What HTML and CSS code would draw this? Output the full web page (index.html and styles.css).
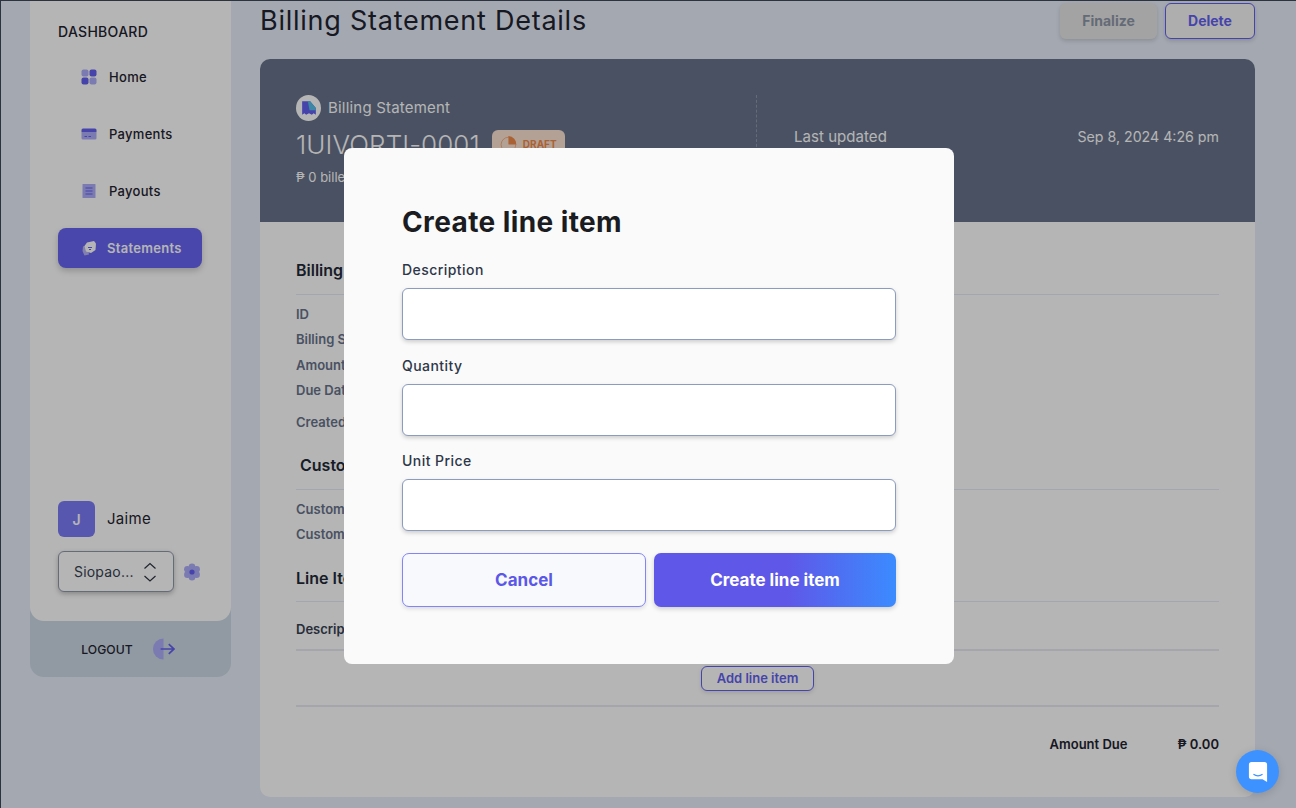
FILE: index.html
```html
<!DOCTYPE html>
<html lang="en">

<head>
    <meta charset="UTF-8">
    <meta name="viewport" content="width=device-width, initial-scale=1.0">
    <title>Billing Statement Details</title>
    <link rel="stylesheet" href="styles.css">
</head>

<body>
    <div class="page">
        <aside class="sidebar">
            <div class="sidebar-main">
                <div class="sidebar-title">DASHBOARD</div>
                <nav class="nav">
                    <a href="#" class="nav-item">
                        <svg class="nav-icon" viewBox="0 0 16 16">
                            <rect x="0.5" y="0.5" width="7" height="7" rx="2" fill="#aeadf9" />
                            <rect x="8.5" y="0.5" width="7" height="7" rx="2" fill="#6361f0" />
                            <rect x="0.5" y="8.5" width="7" height="7" rx="2" fill="#6361f0" />
                            <rect x="8.5" y="8.5" width="7" height="7" rx="2" fill="#aeadf9" />
                        </svg>
                        Home
                    </a>
                    <a href="#" class="nav-item">
                        <svg class="nav-icon" viewBox="0 0 16 16">
                            <path d="M2 2.500h12A1.500 1.500 0 0 1 15.500 4V6H0.500V4A1.500 1.500 0 0 1 2 2.500z" fill="#6361f0" />
                            <path d="M0.500 6H15.500v6a1.500 1.500 0 0 1-1.500 1.500H2A1.500 1.500 0 0 1 0.500 12z" fill="#aeadf9" />
                            <path d="M3.500 10.500h2.500M7.500 10.500h2.500" stroke="#6361f0" stroke-width="1" />
                        </svg>
                        Payments
                    </a>
                    <a href="#" class="nav-item">
                        <svg class="nav-icon" viewBox="0 0 16 16">
                            <rect x="1.500" y="1" width="13" height="14" rx="0.500" fill="#aeadf9" />
                            <path d="M4.500 5h7M4.500 8h7M4.500 11h7" stroke="#6361f0" stroke-width="1.100" />
                        </svg>
                        Payouts
                    </a>
                    <a href="#" class="nav-item nav-item-active">
                        <svg class="nav-icon" viewBox="0 0 16 16">
                            <path d="M2 6.500 6 5 8 14.500 3.500 15.500 1.500 11z" fill="#d9d9f5" opacity="0.7" />
                            <path d="M6 2.500 13 1l2 2.500-.5 6.500-4.500 3-5-1.500L3.500 6z" fill="#fff" />
                            <path d="M7 7.500h4M8 9.500h2" stroke="#6361f0" stroke-width="1" />
                        </svg>
                        Statements
                    </a>
                </nav>
                <div class="sidebar-bottom">
                    <div class="user">
                        <div class="avatar">J</div>
                        <span class="user-name">Jaime</span>
                    </div>
                    <div class="org">
                        <div class="org-select">
                            <span class="org-name">Siopao...</span>
                            <svg class="chevrons" viewBox="0 0 14 24">
                                <path d="M1.500 8.500 7 3.500l5.500 5M1.500 16 7 21l5.500-5" fill="none" stroke="#2d3340" stroke-width="1.200" />
                            </svg>
                        </div>
                        <svg class="gear" viewBox="0 0 18 18">
                            <g fill="#aeadf9">
                                <circle cx="9" cy="3.700" r="3.300" />
                                <circle cx="9" cy="14.300" r="3.300" />
                                <circle cx="4.400" cy="6.350" r="3.300" />
                                <circle cx="13.600" cy="6.350" r="3.300" />
                                <circle cx="4.400" cy="11.650" r="3.300" />
                                <circle cx="13.600" cy="11.650" r="3.300" />
                                <circle cx="9" cy="9" r="4" />
                            </g>
                            <circle cx="9" cy="9" r="2.600" fill="#6361f0" />
                        </svg>
                    </div>
                </div>
            </div>
            <a href="#" class="logout">
                <span>LOGOUT</span>
                <svg class="logout-icon" viewBox="0 0 24 22">
                    <path d="M12 0v22A11 11 0 0 1 12 0z" fill="#aeadf9" />
                    <path d="M9 11h14M17.500 6l5.500 5-5.500 5" fill="none" stroke="#6361f0" stroke-width="1.800" />
                </svg>
            </a>
        </aside>

        <main class="main">
            <div class="main-header">
                <h1 class="page-title">Billing Statement Details</h1>
                <div class="actions">
                    <button class="btn btn-disabled">Finalize</button>
                    <button class="btn btn-outline">Delete</button>
                </div>
            </div>

            <section class="card">
                <div class="card-top">
                    <div class="top-left">
                        <div class="doc-type">
                            <span class="doc-logo">
                                <svg viewBox="0 0 14 14" width="16" height="16">
                                    <path d="M1 1h7l5 6v6l-2-1.500L9.500 13 7 11.500 4.500 13 3 11.500 1 13z" fill="#6361f0" />
                                    <path d="M6 1h2l5 6v2H7.500z" fill="#53bfe8" />
                                </svg>
                            </span>
                            Billing Statement
                        </div>
                        <div class="doc-number">
                            1UIVORTI-0001
                            <span class="badge">
                                <svg viewBox="0 0 16 16" width="18" height="18">
                                    <circle cx="7.500" cy="8.500" r="6.500" fill="none" stroke="#f08a4b" stroke-width="0.500" />
                                    <path d="M7.500 1a7 7 0 0 1 7 7.500h-7z" fill="#f08a4b" />
                                </svg>
                                DRAFT
                            </span>
                        </div>
                        <div class="doc-billed">₱ 0 billed</div>
                    </div>
                    <div class="top-right">
                        <span>Last updated</span>
                        <span class="top-date">Sep 8, 2024 4:26 pm</span>
                    </div>
                </div>

                <div class="card-body">
                    <h2 class="section-title">Billing Details</h2>
                    <div class="rows">
                        <div class="row">ID</div>
                        <div class="row">Billing Statement</div>
                        <div class="row">Amount Due</div>
                        <div class="row">Due Date</div>
                        <div class="row row-gap">Created at</div>
                    </div>

                    <h2 class="section-title section-customer">Customer Details</h2>
                    <div class="rows">
                        <div class="row">Customer Name</div>
                        <div class="row">Customer Email</div>
                    </div>

                    <h2 class="section-title section-lines">Line Items</h2>
                    <div class="table-head">Description</div>
                    <div class="add-line">
                        <button class="btn-small">Add line item</button>
                    </div>
                    <div class="total">
                        <span>Amount Due</span>
                        <span class="total-value">₱ 0.00</span>
                    </div>
                </div>
            </section>
        </main>
    </div>

    <div class="overlay">
        <form class="modal">
            <h2 class="modal-title">Create line item</h2>
            <div class="field">
                <label for="description">Description</label>
                <input type="text" id="description" class="form-control">
            </div>
            <div class="field">
                <label for="quantity">Quantity</label>
                <input type="text" id="quantity" class="form-control">
            </div>
            <div class="field">
                <label for="unitPrice">Unit Price</label>
                <input type="text" id="unitPrice" class="form-control">
            </div>
            <div class="modal-actions">
                <button type="button" class="modal-btn modal-cancel">Cancel</button>
                <button type="submit" class="modal-btn modal-submit">Create line item</button>
            </div>
        </form>
    </div>

    <button class="chat" aria-label="Chat">
        <svg viewBox="0 0 22 24" width="20" height="22">
            <path d="M4 1h14a3 3 0 0 1 3 3v19l-5-3H4a3 3 0 0 1-3-3V4a3 3 0 0 1 3-3z" fill="#fff" />
            <path d="M6 14.500c3 2 7 2 10 0" fill="none" stroke="#3d92ff" stroke-width="1.300" />
        </svg>
    </button>
</body>

</html>
```

FILE: styles.css
```css
* {
    margin: 0;
    padding: 0;
    box-sizing: border-box;
    font-family: 'Inter', 'Noto Sans', sans-serif;
}

body {
    width: 1296px;
    height: 808px;
    overflow: hidden;
    background-color: #e7edf9;
}

a {
    text-decoration: none;
    color: inherit;
}

.page {
    display: flex;
    height: 808px;
    padding-left: 29px;
    gap: 29px;
    border-left: 1px solid #3f485a;
    border-top: 1px solid #3f485a;
}

/* sidebar */
.sidebar {
    width: 201px;
    flex-shrink: 0;
    height: 676px;
    background-color: #cdd9e6;
    border-radius: 0 0 14px 14px;
}

.sidebar-main {
    display: flex;
    flex-direction: column;
    height: 620px;
    padding: 22px 28px 29px;
    background-color: #fff;
    border-radius: 0 0 14px 14px;
}

.sidebar-title {
    font-size: 14px;
    line-height: 18px;
    font-weight: 500;
    color: #1f2430;
    letter-spacing: 0.3px;
}

.nav {
    display: flex;
    flex-direction: column;
    gap: 17px;
    margin-top: 16px;
}

.nav-item {
    display: flex;
    align-items: center;
    gap: 12px;
    width: 144px;
    height: 40px;
    padding-left: 23px;
    font-size: 13px;
    font-weight: 500;
    color: #1f2430;
    letter-spacing: 0.3px;
}

.nav-icon {
    width: 16px;
    height: 16px;
    flex-shrink: 0;
}

.nav-item-active {
    gap: 10px;
    font-weight: 600;
    color: #fff;
    background-color: #6865f1;
    border-radius: 8px;
    box-shadow: 0 3px 6px rgba(0, 0, 0, 0.2);
}

.sidebar-bottom {
    margin-top: auto;
}

.user {
    display: flex;
    align-items: center;
    gap: 12px;
}

.avatar {
    display: flex;
    align-items: center;
    justify-content: center;
    width: 37px;
    height: 36px;
    font-size: 14px;
    font-weight: 600;
    color: #fff;
    background-color: #7d7bf8;
    border-radius: 6px;
}

.user-name {
    margin-top: -2px;
    font-size: 15px;
    color: #1f2430;
    letter-spacing: 0.3px;
}

.org {
    display: flex;
    align-items: center;
    gap: 9px;
    margin-top: 14px;
    width: 160px;
}

.org-select {
    display: flex;
    align-items: center;
    justify-content: space-between;
    flex-shrink: 0;
    width: 116px;
    height: 41px;
    padding: 0 16px 0 15px;
    background-color: #fff;
    border: 1px solid #8e98aa;
    border-radius: 6px;
    box-shadow: 0 2px 5px rgba(0, 0, 0, 0.25);
}

.org-name {
    font-size: 14px;
    color: #374151;
    letter-spacing: 0.2px;
}

.chevrons {
    width: 14px;
    height: 24px;
}

.gear {
    width: 18px;
    height: 18px;
    flex-shrink: 0;
}

.logout {
    display: flex;
    align-items: center;
    justify-content: center;
    gap: 19px;
    height: 56px;
    padding-right: 5px;
    font-size: 12.2px;
    font-weight: 500;
    color: #1f2430;
}

.logout-icon {
    width: 23px;
    height: 22px;
}

/* main */
.main {
    width: 995px;
    flex-shrink: 0;
}

.main-header {
    display: flex;
    align-items: center;
    justify-content: space-between;
    height: 58px;
    padding-bottom: 18px;
}

.page-title {
    font-size: 27px;
    line-height: 36px;
    font-weight: 400;
    color: #1f2430;
    letter-spacing: 0.75px;
}

.actions {
    display: flex;
    gap: 8px;
}

.btn {
    height: 36px;
    padding-bottom: 1px;
    font-size: 14px;
    font-weight: 700;
    border-radius: 6px;
}

.btn-disabled {
    width: 97px;
    color: #8e97a8;
    background-color: #e6e6e6;
    border: none;
    box-shadow: 0 2px 4px rgba(0, 0, 0, 0.15);
}

.btn-outline {
    width: 90px;
    color: #6361f0;
    background-color: #f5f5f7;
    border: 1px solid #6361f0;
    box-shadow: 0 2px 4px rgba(0, 0, 0, 0.15);
}

.card {
    height: 738px;
    background-color: #fff;
    border-radius: 10px;
    overflow: hidden;
}

.card-top {
    display: flex;
    height: 163px;
    padding: 36px;
    background-color: #68738b;
    color: #fff;
}

.top-left {
    width: 461px;
    border-right: 1px dashed #8d97ac;
}

.doc-type {
    display: flex;
    align-items: center;
    gap: 7px;
    font-size: 15px;
    line-height: 26px;
    letter-spacing: 0.2px;
}

.doc-logo {
    display: flex;
    align-items: center;
    justify-content: center;
    width: 25px;
    height: 26px;
    background-color: #fff;
    border-radius: 50%;
}

.doc-number {
    display: flex;
    align-items: center;
    gap: 12px;
    height: 24px;
    margin-top: 11px;
    font-size: 26px;
    font-weight: 300;
    letter-spacing: 0.1px;
}

.badge {
    display: flex;
    align-items: center;
    gap: 5px;
    height: 28px;
    padding: 0 8px;
    font-size: 10px;
    font-weight: 700;
    letter-spacing: 0;
    color: #f08a4b;
    background-color: #fde3d3;
    border-radius: 6px;
}

.doc-billed {
    margin-top: 11px;
    font-size: 13px;
    line-height: 20px;
}

.top-right {
    display: flex;
    justify-content: space-between;
    flex: 1;
    padding: 32px 0 0 37px;
    font-size: 15px;
    line-height: 20px;
    letter-spacing: 0.05px;
}

.top-date {
    font-size: 14.2px;
    letter-spacing: 0;
}

.card-body {
    padding: 36px 36px 0;
}

.section-title {
    height: 37px;
    font-size: 16px;
    line-height: 24px;
    font-weight: 600;
    color: #1f2937;
    border-bottom: 1px solid #e6eaf5;
}

.section-customer {
    margin-top: 17.5px;
    padding-left: 4px;
}

.section-lines {
    height: 36px;
    margin-top: 18.4px;
}

.rows {
    padding-top: 7px;
}

.row {
    height: 25.3px;
    font-size: 13px;
    line-height: 25px;
    font-weight: 600;
    color: #68738b;
}

.row-gap {
    margin-top: 7px;
}

.table-head {
    height: 49px;
    padding-top: 15px;
    font-size: 13px;
    line-height: 25px;
    font-weight: 600;
    color: #374151;
    border-bottom: 2px solid #e8eaf2;
}

.add-line {
    display: flex;
    justify-content: center;
    padding: 15px 0 14px;
    border-bottom: 2px solid #e8eaf2;
}

.btn-small {
    width: 113px;
    height: 25px;
    font-size: 13px;
    font-weight: 600;
    color: #6361f0;
    background-color: #fff;
    border: 1px solid #6361f0;
    border-radius: 6px;
    box-shadow: 0 2px 4px rgba(0, 0, 0, 0.12);
}

.total {
    display: flex;
    justify-content: flex-end;
    gap: 50px;
    margin-top: 25px;
    font-size: 13px;
    line-height: 25px;
    font-weight: 600;
    color: #1f2430;
}

/* modal */
.overlay {
    position: fixed;
    inset: 0;
    display: flex;
    justify-content: center;
    align-items: flex-start;
    padding: 148px 0 0 2px;
    background-color: rgba(0, 0, 0, 0.29);
}

.modal {
    width: 610px;
    height: 516px;
    padding: 56px 58px 0;
    background-color: #fafafa;
    border-radius: 8px;
}

.modal-title {
    font-size: 28px;
    line-height: 36px;
    font-weight: 700;
    color: #1a1c21;
    letter-spacing: 0.4px;
    margin-bottom: 20px;
}

.field {
    margin-bottom: 15.5px;
}

.field label {
    display: block;
    margin-bottom: 9px;
    font-size: 14px;
    line-height: 19px;
    font-weight: 500;
    color: #2d3748;
    letter-spacing: 0.45px;
}

.form-control {
    display: block;
    width: 100%;
    height: 52px;
    background-color: #fff;
    border: 1px solid #8d9bbd;
    border-radius: 6px;
    box-shadow: 0 2px 4px rgba(0, 0, 0, 0.18);
}

.modal-actions {
    display: flex;
    gap: 8px;
    margin-top: 22px;
}

.modal-btn {
    flex: 1;
    height: 54px;
    padding-bottom: 1px;
    font-size: 17px;
    font-weight: 700;
    border-radius: 7px;
}

.modal-cancel {
    color: #5b57e8;
    background-color: #f7f9fc;
    border: 1.5px solid #8484f5;
    box-shadow: 0 2px 4px rgba(0, 0, 0, 0.12);
}

.modal-submit {
    color: #fff;
    border: none;
    background-image: linear-gradient(90deg, #5f57e8 0%, #5f57e8 55%, #3b8bff 100%);
    box-shadow: 0 2px 5px rgba(0, 0, 0, 0.18);
}

.chat {
    position: fixed;
    right: 17px;
    bottom: 15px;
    display: flex;
    align-items: center;
    justify-content: center;
    width: 43px;
    height: 43px;
    background-color: #3d92ff;
    border: none;
    border-radius: 50%;
    box-shadow: 0 2px 8px rgba(0, 0, 0, 0.15);
}
```
